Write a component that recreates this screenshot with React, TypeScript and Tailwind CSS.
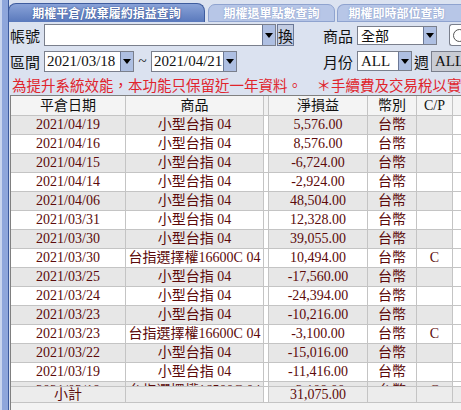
import React from "react";

type Row = [string, string, string, string];

const rows: Row[] = [
  ["2021/04/19", "小型台指 04", "5,576.00", ""],
  ["2021/04/16", "小型台指 04", "8,576.00", ""],
  ["2021/04/15", "小型台指 04", "-6,724.00", ""],
  ["2021/04/14", "小型台指 04", "-2,924.00", ""],
  ["2021/04/06", "小型台指 04", "48,504.00", ""],
  ["2021/03/31", "小型台指 04", "12,328.00", ""],
  ["2021/03/30", "小型台指 04", "39,055.00", ""],
  ["2021/03/30", "台指選擇權16600C 04", "10,494.00", "C"],
  ["2021/03/25", "小型台指 04", "-17,560.00", ""],
  ["2021/03/24", "小型台指 04", "-24,394.00", ""],
  ["2021/03/23", "小型台指 04", "-10,216.00", ""],
  ["2021/03/23", "台指選擇權16600C 04", "-3,100.00", "C"],
  ["2021/03/22", "小型台指 04", "-15,016.00", ""],
  ["2021/03/19", "小型台指 04", "-11,416.00", ""],
  ["2021/03/18", "台指選擇權16500C 04", "-2,108.00", "C"],
];

const cols = "grid grid-cols-[115px_138px_5px_99px_49px_36px_60px]";

function Arrow() {
  return (
    <span className="flex h-full w-[13px] shrink-0 items-center justify-center border-l border-[#6b7896] bg-[#aebfe2]">
      <span className="h-0 w-0 border-x-[4px] border-t-[5px] border-x-transparent border-t-black" />
    </span>
  );
}

function Tabs() {
  return (
    <div className="flex h-[22px] shrink-0 items-end font-['Noto_Sans_CJK_TC',sans-serif] text-[12px] font-bold text-white">
      <div className="ml-[-1px] flex h-[19px] w-[197px] items-center justify-center rounded-t-[8px] border border-b-0 border-[#3e5c9e] bg-gradient-to-b from-[#8aa3d8] to-[#5a79bc] [text-shadow:0_0_2px_#2a4486]">
        期權平倉/放棄履約損益查詢
      </div>
      <div className="ml-[3px] flex h-[18px] w-[127px] items-center justify-center rounded-t-[7px] border border-[#8fa3cf] bg-[#b7c6e7] [text-shadow:0_0_2px_#7f93c4]">
        期權退單點數查詢
      </div>
      <div className="ml-[2px] flex h-[18px] flex-1 items-center justify-center rounded-tl-[7px] border border-r-0 border-[#8fa3cf] bg-[#b7c6e7] pr-[6px] [text-shadow:0_0_2px_#7f93c4]">
        期權即時部位查詢
      </div>
    </div>
  );
}

function Toolbar() {
  return (
    <div className="flex shrink-0 flex-col font-['Noto_Sans_CJK_TC',sans-serif] text-[15px] text-[#111]">
      <div className="flex h-[26px] items-center">
        <span className="ml-[1px] w-[34px] leading-none">帳號</span>
        <div className="flex h-[22px] w-[232px] border border-[#7a7f8c] bg-white">
          <span className="flex-1" />
          <Arrow />
        </div>
        <button className="ml-[1px] flex h-[22px] w-[17px] items-center justify-center border border-[#6b7896] bg-[#c3cde3] text-[15px] leading-none">
          換
        </button>
        <span className="ml-[29px] w-[34px] leading-none">商品</span>
        <div className="flex h-[19px] w-[80px] border border-[#7a7f8c] bg-white">
          <span className="flex-1 pl-[3px] text-[14px] leading-[17px]">全部</span>
          <Arrow />
        </div>
        <div className="ml-[12px] flex h-[22px] flex-1 items-center overflow-hidden rounded-l-[3px] border border-r-0 border-[#7a7f8c] bg-white pl-[3px]">
          <span className="h-[13px] w-[13px] shrink-0 rounded-full border-[1.5px] border-[#555]" />
        </div>
      </div>
      <div className="flex h-[26px] items-center">
        <span className="ml-[1px] w-[34px] leading-none">區間</span>
        <div className="flex h-[21px] w-[90px] border border-[#7a7f8c] bg-white">
          <span className="flex-1 pl-[2px] font-['Liberation_Serif',serif] text-[15px] leading-[19px]">2021/03/18</span>
          <Arrow />
        </div>
        <span className="w-[17px] text-center font-['Liberation_Serif',serif] text-[15px]">~</span>
        <div className="flex h-[21px] w-[86px] border border-[#7a7f8c] bg-white">
          <span className="flex-1 pl-[2px] font-['Liberation_Serif',serif] text-[15px] leading-[19px]">2021/04/21</span>
          <Arrow />
        </div>
        <span className="ml-[86px] w-[34px] leading-none">月份</span>
        <div className="flex h-[20px] w-[55px] border border-[#7a7f8c] bg-white">
          <span className="flex-1 pl-[3px] font-['Liberation_Serif',serif] text-[15px] leading-[18px]">ALL</span>
          <Arrow />
        </div>
        <span className="ml-[2px] w-[17px] leading-none">週</span>
        <div className="flex h-[21px] flex-1 items-center overflow-hidden border border-r-0 border-[#7a7f8c] bg-[#c9ccd4] pl-[3px] font-['Liberation_Serif',serif] text-[15px]">
          ALL
        </div>
      </div>
      <div className="flex h-[21px] items-center whitespace-nowrap pl-[3px] text-[14.5px] text-[#e0242c]">
        為提升系統效能，本功能只保留近一年資料。　＊手續費及交易稅以實際扣收為準
      </div>
    </div>
  );
}

function Cell({ children, className = "" }: { children?: React.ReactNode; className?: string }) {
  return (
    <div className={`overflow-hidden whitespace-nowrap border-r border-[#c4c4c4] text-center ${className}`}>
      {children}
    </div>
  );
}

function Grid() {
  return (
    <div className="ml-[1px] flex min-h-0 flex-1 flex-col overflow-hidden border-l border-t border-[#808080] bg-[#f1f1f1] font-['Liberation_Serif','Noto_Sans_CJK_TC',serif] text-[14px]">
      <div className={`${cols} h-[20px] shrink-0 border-b border-[#c4c4c4] bg-[#f4f4f4] leading-[19px] text-[#111]`}>
        <Cell>平倉日期</Cell>
        <Cell>商品</Cell>
        <Cell className="bg-[#f1f1f1]" />
        <Cell>淨損益</Cell>
        <Cell>幣別</Cell>
        <Cell>C/P</Cell>
        <Cell />
      </div>
      <div className="h-[270px] shrink-0 overflow-hidden bg-white">
        {rows.map((r, i) => (
          <div
            key={i}
            className={`${cols} h-[19px] border-b border-[#c4c4c4] leading-[18px] text-[#5c0a0a] ${
              i % 2 === 0 ? "bg-[#e7e7e7]" : "bg-white"
            }`}
          >
            <Cell>{r[0]}</Cell>
            <Cell>{r[1]}</Cell>
            <Cell className="bg-white" />
            <Cell>{r[2]}</Cell>
            <Cell>台幣</Cell>
            <Cell>{r[3]}</Cell>
            <Cell className="bg-white" />
          </div>
        ))}
      </div>
      <div className={`${cols} h-[17px] shrink-0 border-y border-[#c4c4c4] bg-[#ececec] leading-[15px] text-[#5c0a0a]`}>
        <Cell>小計</Cell>
        <Cell />
        <Cell className="bg-white" />
        <Cell>31,075.00</Cell>
        <Cell />
        <Cell />
        <Cell />
      </div>
      <div className="flex-1 bg-[#f3f3f3]" />
    </div>
  );
}

export default function App() {
  return (
    <div className="flex h-[410px] w-[461px] overflow-hidden bg-[#dbe2f0]">
      <div className="h-full w-[9px] shrink-0 border-l-2 border-r border-l-[#c9d5ee] border-r-[#3b5a9e] bg-[#8ea6db]" />
      <div className="flex min-w-0 flex-1 flex-col">
        <Tabs />
        <Toolbar />
        <Grid />
      </div>
    </div>
  );
}
